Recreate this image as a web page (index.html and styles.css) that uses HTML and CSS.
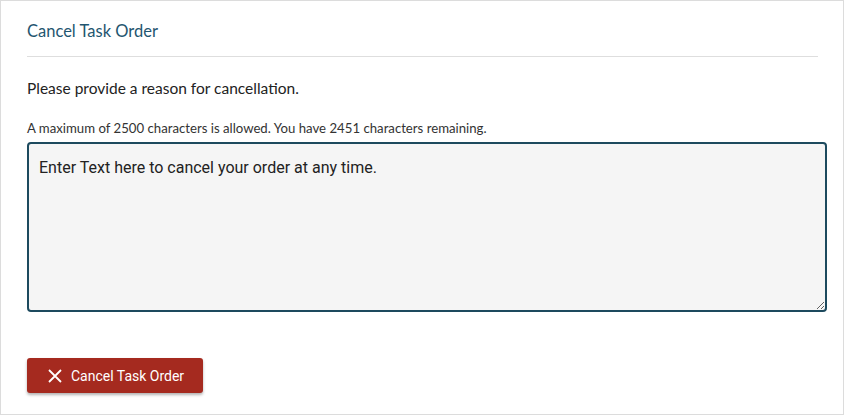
FILE: index.html
```html
<!DOCTYPE html>
<html>
<head>
<meta charset="utf-8">
<link rel="stylesheet" href="styles.css">
</head>
<body>
<div class="panel">
  <div class="header">
    <h2 class="title">Cancel Task Order</h2>
  </div>
  <p class="prompt">Please provide a reason for cancellation.</p>
  <p class="hint">A maximum of 2500 characters is allowed. You have 2451 characters remaining.</p>
  <textarea class="reason">Enter Text here to cancel your order at any time.</textarea>
  <div class="actions">
    <button class="btn-cancel" type="button">
      <svg class="x-icon" width="14" height="14" viewBox="0 0 14 14"><path d="M1 1 L13 13 M13 1 L1 13" stroke="#fff" stroke-width="1.8" fill="none"/></svg>
      <span>Cancel Task Order</span>
    </button>
  </div>
</div>
</body>
</html>
```
FILE: styles.css
```css
html, body {
  margin: 0;
  padding: 0;
  background: #fff;
}
.panel {
  box-sizing: border-box;
  width: 844px;
  height: 415px;
  border: 1px solid #dcdcdc;
  padding: 0 17px 0 26px;
  font-family: Lato, "Noto Sans", sans-serif;
  color: #222;
}
.header {
  margin-right: 8px;
  border-bottom: 1px solid #dedede;
  height: 56px;
  box-sizing: border-box;
  padding-top: 20px;
}
.title {
  margin: 0;
  font-size: 16.5px;
  font-weight: 400;
  color: #1f5670;
  line-height: 20px;
}
.prompt {
  margin: 21px 0 0;
  font-size: 15.5px;
  line-height: 20px;
  color: #222;
}
.hint {
  margin: 22px 0 0;
  font-size: 13.2px;
  line-height: 16px;
  color: #333;
}
.reason {
  display: block;
  box-sizing: border-box;
  width: 800px;
  height: 170px;
  margin-top: 6px;
  border: 2px solid #1d4a5e;
  border-radius: 4px;
  background: #f5f5f5;
  padding: 14px 10px;
  font-family: Roboto, sans-serif;
  font-size: 16px;
  line-height: 20px;
  color: #222;
  resize: vertical;
  outline: none;
}
.actions {
  margin-top: 46px;
}
.btn-cancel {
  display: inline-flex;
  align-items: center;
  gap: 9px;
  height: 35px;
  width: 176px;
  box-sizing: border-box;
  padding: 0 0 0 21px;
  border: none;
  border-radius: 3px;
  background: #a52a1f;
  color: #fff;
  font-family: Roboto, sans-serif;
  font-size: 14px;
  box-shadow: 0 2px 3px rgba(0,0,0,0.3);
  cursor: pointer;
}
.x-icon {
  flex: none;
}
```
